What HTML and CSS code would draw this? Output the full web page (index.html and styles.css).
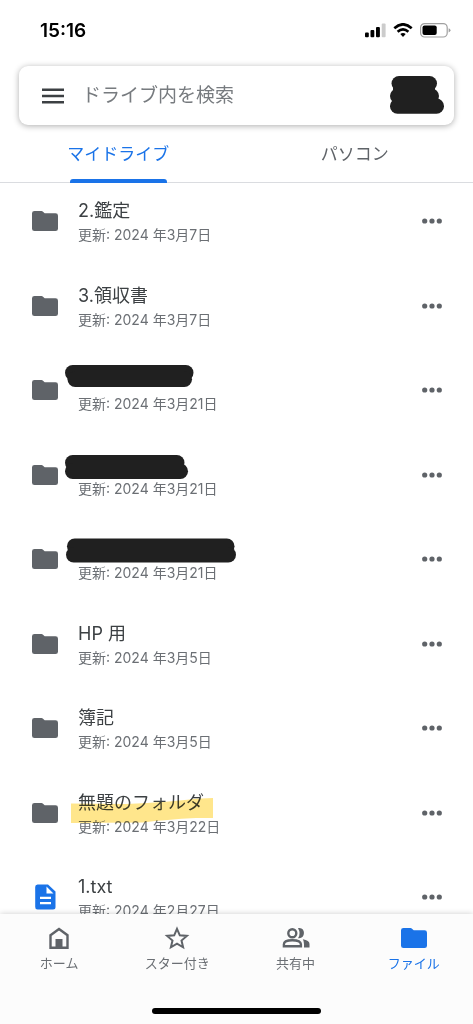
FILE: index.html
```
<!DOCTYPE html>
<html lang="ja">
<head>
<meta charset="utf-8">
<meta name="viewport" content="width=device-width, initial-scale=1">
<title>マイドライブ</title>
<link rel="stylesheet" href="styles.css">
</head>
<body>
<svg class="defs" aria-hidden="true">
  <symbol id="folder" viewBox="0 0 26 20"><path d="M2.500 0H9.500Q10.400 0 11 .7L12.700 2.300H23.500Q26 2.300 26 4.700V17.700Q26 20 23.500 20H2.500Q0 20 0 17.700V2.300Q0 0 2.500 0Z"/></symbol>
  <symbol id="dots" viewBox="0 0 20 6"><circle cx="2.700" cy="3" r="2.600"/><circle cx="10" cy="3" r="2.600"/><circle cx="17.300" cy="3" r="2.600"/></symbol>
</svg>

<div class="status">
  <time class="clock">15:16</time>
  <div class="status-icons">
    <svg width="21" height="15" viewBox="0 0 21 15"><rect x="0" y="9.500" width="3.800" height="4.700" rx="1"/><rect x="5.500" y="7" width="3.800" height="7.200" rx="1"/><rect x="11" y="4" width="3.900" height="10.200" rx="1"/><rect class="faint" x="16.700" y=".5" width="3.900" height="13.700" rx="1"/></svg>
    <svg width="20" height="15" viewBox="0 0 20 15"><g class="waves"><path d="M1.300 5.300Q10-2.700 18.700 5.300"/><path d="M4.600 8.700Q10 4 15.400 8.700"/></g><path d="M7.300 11Q10 8.800 12.700 11L10 14Z"/></svg>
    <svg width="31" height="15" viewBox="0 0 31 15"><rect class="shell" x=".6" y=".6" width="26.600" height="13.400" rx="4"/><rect x="2.500" y="2.500" width="14.200" height="9.600" rx="2"/><path class="tip" d="M28.600 5.200Q30.500 5.700 30.500 7.300T28.600 9.400Z"/></svg>
  </div>
</div>

<header class="search">
  <button class="plain" aria-label="メニュー"><svg width="22" height="16" viewBox="0 0 22 16"><path d="M0 .5H22V3H0ZM0 6.700H22V9.200H0ZM0 12.900H22V15.400H0Z"/></svg></button>
  <input class="search-box" type="search" aria-label="ドライブ内を検索" placeholder="ドライブ内を検索">
  <button class="plain" aria-label="アカウント"><svg class="ink" width="54" height="38" viewBox="0 0 54 38"><rect x="1.500" y="0" width="45.500" height="15" rx="7.500"/><rect x="0" y="12.500" width="49" height="15" rx="7.500"/><rect x="0" y="22.500" width="54" height="15.300" rx="7.500"/><rect x="3" y="7" width="42" height="24"/></svg></button>
</header>

<nav class="tabs">
  <a class="tab active" href="#my">マイドライブ</a>
  <a class="tab" href="#pc">パソコン</a>
</nav>

<main class="content">
  <ul class="list">
    <li class="row"><svg class="icon"><use href="#folder"/></svg><div class="info"><div class="name">2.鑑定</div><div class="date">更新: 2024 年3月7日</div></div><button class="plain" aria-label="その他"><svg class="more"><use href="#dots"/></svg></button></li>
    <li class="row"><svg class="icon"><use href="#folder"/></svg><div class="info"><div class="name">3.領収書</div><div class="date">更新: 2024 年3月7日</div></div><button class="plain" aria-label="その他"><svg class="more"><use href="#dots"/></svg></button></li>
    <li class="row"><svg class="icon"><use href="#folder"/></svg><div class="info"><div class="name"><svg class="ink mark" viewBox="0 0 180 32"><rect x="0" y="1" width="128.500" height="15.500" rx="7.700"/><rect x="2.500" y="7.500" width="124.500" height="15.500" rx="7.700"/></svg></div><div class="date">更新: 2024 年3月21日</div></div><button class="plain" aria-label="その他"><svg class="more"><use href="#dots"/></svg></button></li>
    <li class="row"><svg class="icon"><use href="#folder"/></svg><div class="info"><div class="name"><svg class="ink mark" viewBox="0 0 180 32"><rect x="0" y="6" width="119.500" height="15.500" rx="7.700"/><rect x="0" y="14.500" width="123" height="15.500" rx="7.700"/></svg></div><div class="date">更新: 2024 年3月21日</div></div><button class="plain" aria-label="その他"><svg class="more"><use href="#dots"/></svg></button></li>
    <li class="row"><svg class="icon"><use href="#folder"/></svg><div class="info"><div class="name"><svg class="ink mark" viewBox="0 0 180 32"><rect x="2" y="5.500" width="167.500" height="15.500" rx="7.700"/><rect x="1" y="14" width="170" height="15.500" rx="7.700"/></svg></div><div class="date">更新: 2024 年3月21日</div></div><button class="plain" aria-label="その他"><svg class="more"><use href="#dots"/></svg></button></li>
    <li class="row"><svg class="icon"><use href="#folder"/></svg><div class="info"><div class="name">HP 用</div><div class="date">更新: 2024 年3月5日</div></div><button class="plain" aria-label="その他"><svg class="more"><use href="#dots"/></svg></button></li>
    <li class="row"><svg class="icon"><use href="#folder"/></svg><div class="info"><div class="name">簿記</div><div class="date">更新: 2024 年3月5日</div></div><button class="plain" aria-label="その他"><svg class="more"><use href="#dots"/></svg></button></li>
    <li class="row"><svg class="icon"><use href="#folder"/></svg><div class="info"><div class="name">無題のフォルダ<svg class="marker" viewBox="0 0 142 26"><path d="M0 5.500L55 6Q100 4 125 .8L142 0V20H125Q95 21.500 72 24.500L0 25Z"/></svg></div><div class="date">更新: 2024 年3月22日</div></div><button class="plain" aria-label="その他"><svg class="more"><use href="#dots"/></svg></button></li>
    <li class="row"><svg class="icon doc" viewBox="0 0 26 26"><path class="paper" d="M5.500 .5H16L23.500 7.500V23Q23.500 25.500 21 25.500H5.500Q3.200 25.500 3.200 23V3Q3.200 .5 5.500 .5Z"/><path class="cut" d="M14.500 2.500V9.500H21.500ZM8 12.700H19V15H8ZM8 17.900H19V20.200H8Z"/></svg><div class="info"><div class="name">1.txt</div><div class="date">更新: 2024 年2月27日</div></div><button class="plain" aria-label="その他"><svg class="more"><use href="#dots"/></svg></button></li>
  </ul>
</main>

<footer class="bottom">
  <nav class="nav">
    <a class="nav-item" href="#home"><svg width="28" height="24" viewBox="0 0 28 24"><path class="line" d="M5.500 9.200L14 3L22.500 9.200V21.700H5.500Z"/><path d="M10.500 13H17.500V22H10.500Z"/></svg>ホーム</a>
    <a class="nav-item" href="#starred"><svg width="28" height="24" viewBox="0 0 28 24"><path class="line thin" d="M14 2.800L16.800 9.300L23.900 9.900L18.500 14.500L20.100 21.300L14 17.700L7.900 21.300L9.500 14.500L4.100 9.900L11.200 9.300Z"/></svg>スター付き</a>
    <a class="nav-item" href="#shared"><svg width="28" height="24" viewBox="0 0 28 24"><circle class="line" cx="10.300" cy="7.200" r="4"/><path class="line" d="M1.900 20.200V18.300Q1.900 14.300 10.300 14.300T18.900 18.300V20.200Z"/><path d="M16 2.200C24 .5 24 13.500 16 12.200Q19.200 7.200 16 2.200ZM20.800 13.300Q27.500 14.500 27.500 18V21.500H22V18.200Q22 15 20.800 13.300Z"/></svg>共有中</a>
    <a class="nav-item active" href="#files"><svg width="28" height="24" viewBox="-1 -2 28 24"><use href="#folder" width="26" height="20"/></svg>ファイル</a>
  </nav>
  <div class="home-bar"></div>
</footer>
</body>
</html>
```
FILE: styles.css
```
* { box-sizing: border-box; }
body {
  margin: 0;
  height: 100vh;
  display: flex;
  flex-direction: column;
  overflow: hidden;
  background: #fff;
  color: #3c4043;
  font-family: Inter, "Noto Sans CJK JP", sans-serif;
  font-weight: 400;
}
svg { display: block; flex: none; }
a { color: inherit; text-decoration: none; }
.defs { position: absolute; width: 0; height: 0; }
.plain {
  display: flex;
  padding: 0;
  border: 0;
  background: none;
  fill: #5f6368;
}
.ink { fill: #202020; }

.status {
  display: flex;
  justify-content: space-between;
  align-items: center;
  height: 60px;
  padding: 0 22px 0 40px;
  color: #000;
}
.clock { font-size: 19px; font-weight: 600; }
.status-icons { display: flex; gap: 7px; }
.faint { fill: #ccc; }
.waves { fill: none; stroke: #000; stroke-width: 2.6; }
.shell { fill: none; stroke: #a0a0a0; stroke-width: 1.2; }
.tip { fill: #a0a0a0; }

.search {
  display: flex;
  align-items: center;
  gap: 18px;
  height: 59px;
  margin: 6px 19px 0;
  padding: 0 10px 0 23px;
  border-radius: 9px;
  background: #fff;
  box-shadow: 0 1px 6px rgba(0, 0, 0, .32);
}
.search .plain { fill: #3c4043; }
.search .plain:last-child { align-self: start; margin-top: 10px; }
.search-box {
  flex: 1;
  min-width: 0;
  height: 32px;
  padding: 0;
  border: 0;
  outline: 0;
  background: none;
  color: #3c4043;
  font: inherit;
  font-size: 19px;
}
.search-box::placeholder { color: #777b7f; opacity: 1; }

.tabs {
  display: grid;
  grid-template-columns: 1fr 1fr;
  height: 58px;
  border-bottom: 1px solid #dadce0;
  color: #5f6368;
  font-size: 17px;
  line-height: 24px;
}
.tab {
  position: relative;
  display: flex;
  justify-content: center;
  padding-top: 17px;
}
.tab.active { color: #1a73e8; }
.tab.active::after {
  content: "";
  position: absolute;
  bottom: -1px;
  width: 97px;
  height: 4px;
  border-radius: 3px 3px 0 0;
  background: #1a73e8;
}

.content { flex: 1; min-height: 0; overflow: hidden; }
.list {
  display: grid;
  grid-auto-rows: 85px 84px;
  margin: 0;
  padding: 0;
  list-style: none;
}
.row {
  display: grid;
  grid-template-columns: 26px 1fr auto;
  column-gap: 20px;
  align-items: center;
  align-content: start;
  padding: 15px 31px 0 32px;
}
.icon { width: 26px; height: 20px; fill: #5f6368; }
.doc { height: 26px; }
.paper { fill: #1a73e8; }
.cut { fill: #fff; }
.more { width: 20px; height: 6px; }
.name {
  position: relative;
  height: 26px;
  margin-bottom: 2px;
  font-size: 18px;
  line-height: 26px;
}
.date {
  color: #6b6f74;
  font-size: 14px;
  line-height: 18px;
}
.mark {
  position: absolute;
  top: -3px;
  left: -13px;
  width: 180px;
  height: 32px;
}
.marker {
  position: absolute;
  top: 8px;
  left: -7px;
  width: 142px;
  height: 26px;
  fill: #ffe68c;
  mix-blend-mode: multiply;
}

.bottom {
  position: relative;
  display: flex;
  flex-direction: column;
  justify-content: space-between;
  align-items: center;
  height: 110px;
  padding: 12px 0 10px;
  background: #fcfcfc;
  box-shadow: 0 0 6px rgba(0, 0, 0, .2);
}
.nav {
  display: grid;
  grid-template-columns: repeat(4, 1fr);
  width: 100%;
}
.nav-item {
  display: flex;
  flex-direction: column;
  align-items: center;
  gap: 4px;
  color: #6b6f74;
  fill: #5f6368;
  font-size: 13px;
  line-height: 18px;
}
.nav-item.active { color: #1a73e8; fill: #1a73e8; }
.line { fill: none; stroke: #5f6368; stroke-width: 2.4; }
.thin { stroke-width: 2; }
.home-bar {
  width: 169px;
  height: 6px;
  border-radius: 3px;
  background: #000;
}
```
